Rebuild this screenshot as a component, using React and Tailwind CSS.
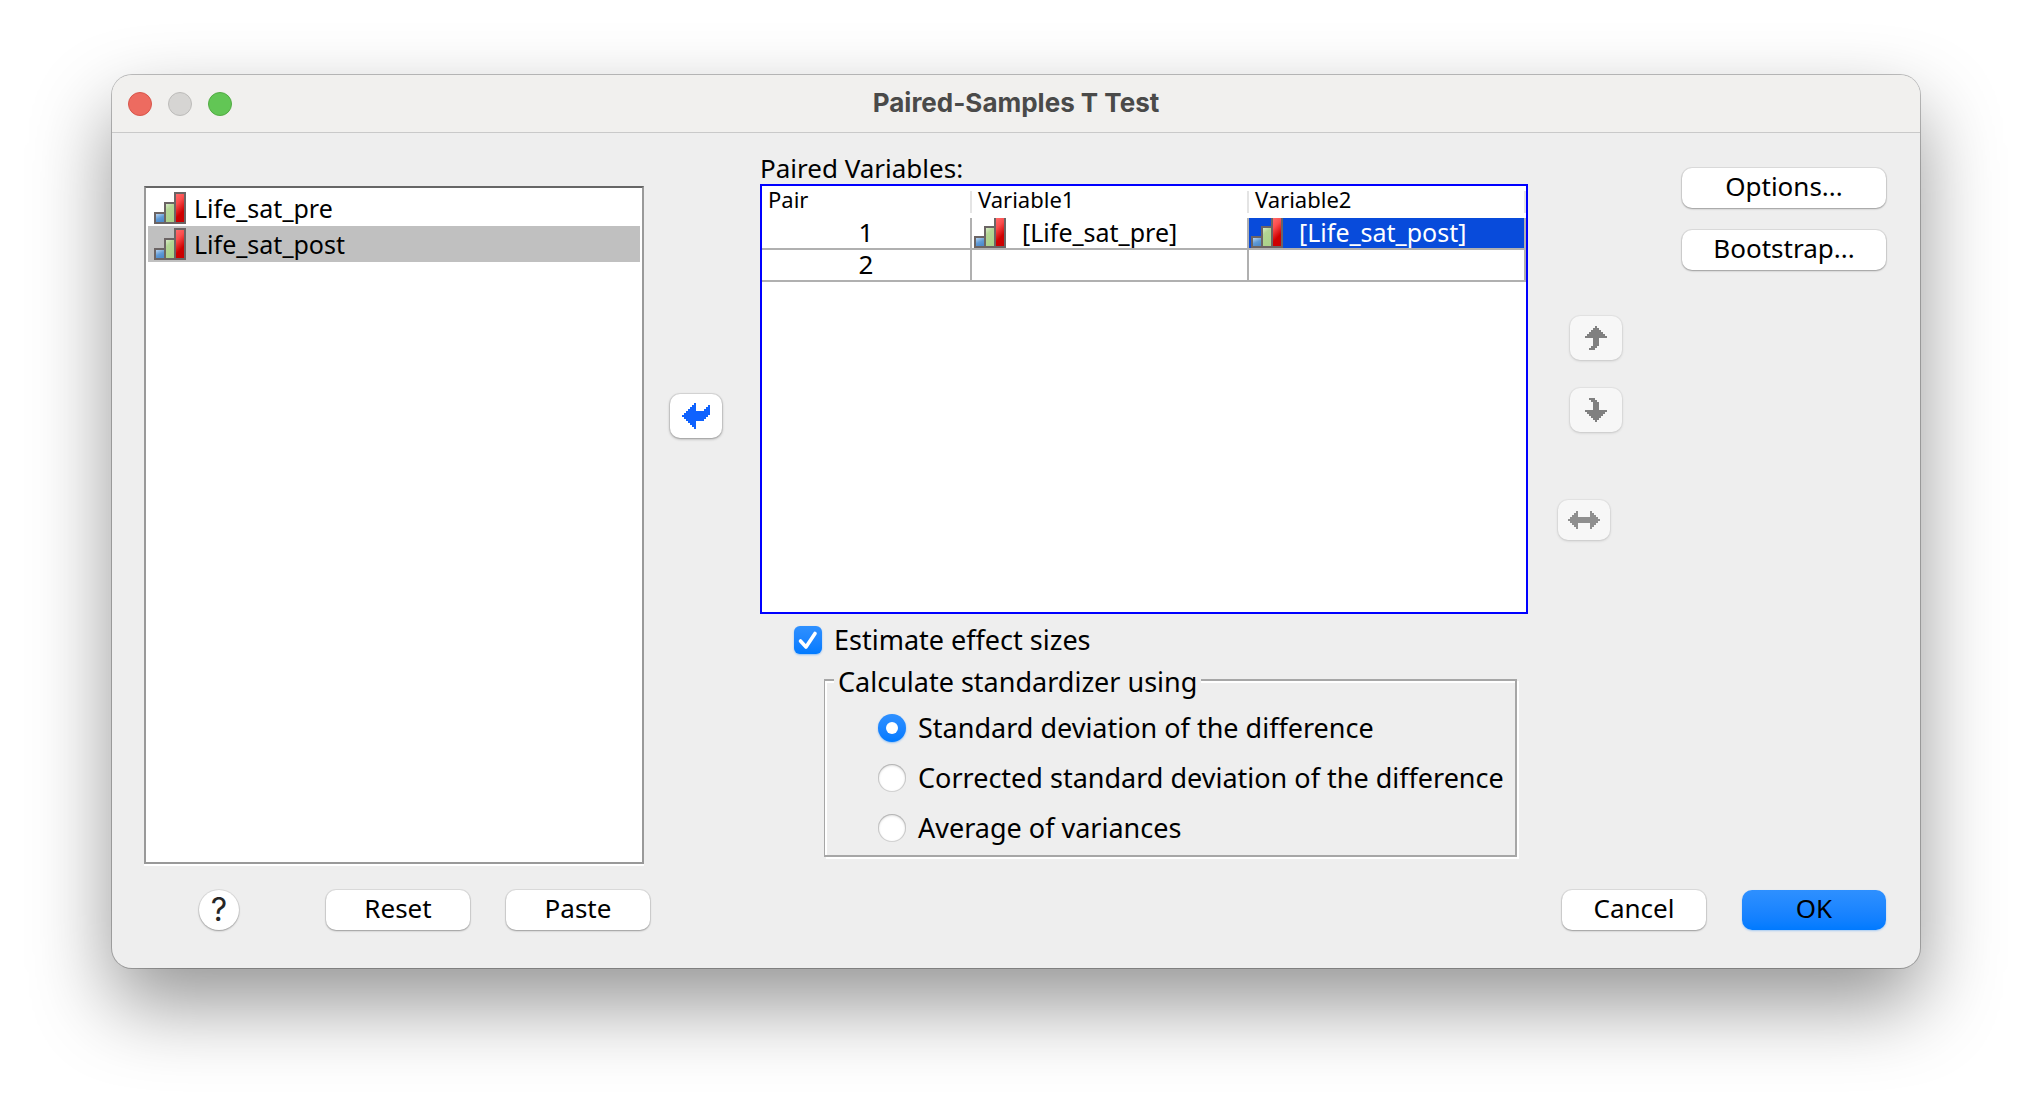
import { useState } from "react";

function OrdinalIcon() {
  return (
    <svg width="32" height="32" viewBox="0 0 16 16" shapeRendering="crispEdges" className="shrink-0" aria-hidden="true">
      <defs>
        <linearGradient id="ordinal-blue" x1="0" y1="0" x2="0.5" y2="1">
          <stop offset="0" stopColor="#b9d5f1" />
          <stop offset="0.6" stopColor="#5f9ad6" />
          <stop offset="1" stopColor="#4f8ccc" />
        </linearGradient>
        <linearGradient id="ordinal-green" x1="0" y1="0" x2="0.4" y2="1">
          <stop offset="0" stopColor="#d9ecc9" />
          <stop offset="0.35" stopColor="#b3d694" />
          <stop offset="1" stopColor="#acd28b" />
        </linearGradient>
        <linearGradient id="ordinal-red" x1="0" y1="0" x2="0.3" y2="1">
          <stop offset="0" stopColor="#ff6b6b" />
          <stop offset="0.35" stopColor="#fb4d4d" />
          <stop offset="0.8" stopColor="#cf0000" />
          <stop offset="1" stopColor="#cc0000" />
        </linearGradient>
      </defs>
      <path d="M0 10H5V5H10V0H16V16H0Z" fill="#6b6464" />
      <rect x="1" y="11" width="4" height="4" fill="url(#ordinal-blue)" />
      <rect x="6" y="6" width="4" height="9" fill="url(#ordinal-green)" />
      <rect x="11" y="1" width="4" height="14" fill="url(#ordinal-red)" />
    </svg>
  );
}

function UpIcon() {
  return (
    <svg width="22" height="24" viewBox="0 0 11 12" shapeRendering="crispEdges" fill="#808080" aria-hidden="true">
      <path d="M5 0h1v1h1v1h1v1h1v1h1v1h1v1H7v4H6v1H5v1H2v-1h1v-1h1V6H0V5h1V4h1V3h1V2h1V1h1z" />
    </svg>
  );
}

function DownIcon() {
  return (
    <svg width="22" height="24" viewBox="0 0 11 12" shapeRendering="crispEdges" fill="#808080" aria-hidden="true">
      <path d="M2 0h3v1h1v1h1v4h4v1h-1v1H9v1H8v1H7v1H6v1H5v-1H4v-1H3V9H2V8H1V7H0V6h4V2H3V1H2z" />
    </svg>
  );
}

function SwapIcon() {
  return (
    <svg width="32" height="18" viewBox="0 0 16 9" shapeRendering="crispEdges" fill="#8f8f8f" aria-hidden="true">
      <path d="M4 0h1v3h6V0h1v1h1v1h1v1h1v1h1v1h-1v1h-1v1h-1v1h-1v1h-1V6H5v3H4V8H3V7H2V6H1V5H0V4h1V3h1V2h1V1h1z" />
    </svg>
  );
}

function LeftIcon() {
  return (
    <svg width="28" height="26" viewBox="0 0 14 13" shapeRendering="crispEdges" fill="#0f62fe" aria-hidden="true">
      <path d="M6 0h1v4h4V3h1V2h1V1h1v5h-1v1h-1v1h-1v1H7v4H6v-1H5v-1H4v-1H3V9H2V8H1V7H0V6h1V5h1V4h1V3h1V2h1V1h1z" />
    </svg>
  );
}

function PushButton({ children, wide = false }) {
  return (
    <button
      type="button"
      className={
        (wide ? "w-[204px]" : "w-36") +
        " h-10 rounded-[10px] bg-white pb-1 text-[26px] leading-9 shadow-[0_0_0_1px_rgba(0,0,0,0.07),0_1px_2px_rgba(0,0,0,0.3)]"
      }
    >
      {children}
    </button>
  );
}

function IconButton({ label, className, children }) {
  return (
    <button
      type="button"
      disabled
      aria-label={label}
      className={
        "flex w-[52px] items-center justify-center rounded-[10px] bg-[#f7f7f7] shadow-[0_0_0_1px_rgba(0,0,0,0.03),0_1px_3px_rgba(0,0,0,0.15)] " +
        className
      }
    >
      {children}
    </button>
  );
}

function VariableCell({ name, selected = false }) {
  return (
    <td
      className={
        "border-r-2 border-b-2 border-[#b0b0b0] p-0 align-top " + (selected ? "bg-[#084bdb] text-white" : "")
      }
    >
      {name && (
        <div className="flex gap-4 pl-[2px]">
          <span className="flex h-[30px] items-end overflow-hidden">
            <OrdinalIcon />
          </span>
          {name}
        </div>
      )}
    </td>
  );
}

const variables = ["Life_sat_pre", "Life_sat_post"];

const standardizers = [
  "Standard deviation of the difference",
  "Corrected standard deviation of the difference",
  "Average of variances",
];

export default function App() {
  const [estimate, setEstimate] = useState(true);
  const [standardizer, setStandardizer] = useState(0);

  return (
    <div className="min-h-screen bg-white px-28 pt-[75px] font-['Noto_Sans','Open_Sans',sans-serif] text-black">
      <main className="rounded-[20px] bg-[#eeeeee] shadow-[0_0_0_1px_rgba(0,0,0,0.24),0_36px_80px_rgba(0,0,0,0.42)]">
        <header className="grid h-[58px] grid-cols-[1fr_auto_1fr] items-center rounded-t-[20px] border-b border-[#c9c9c9] bg-[#f1f0ee] px-4">
          <div className="flex gap-4">
            <button type="button" aria-label="Close" className="size-6 rounded-full border border-[#d8554a] bg-[#ed6b60]" />
            <button type="button" aria-label="Minimize" disabled className="size-6 rounded-full border border-[#bdbcba] bg-[#d6d5d3]" />
            <button type="button" aria-label="Zoom" className="size-6 rounded-full border border-[#52ab43] bg-[#62c655]" />
          </div>
          <h1 className="pb-[2px] font-['Inter',sans-serif] text-[26px] leading-8 font-bold text-[#4a4a49]">Paired-Samples T Test</h1>
        </header>

        <div className="flex pt-[19px] pr-[34px] pl-8">
          <div className="flex flex-[500] flex-col pt-[34px]">
            <ul
              role="listbox"
              aria-label="Variables"
              className="flex-1 border-2 border-[#999] border-t-[#666] bg-white p-[2px] shadow-[0_2px_0_white]"
            >
              {variables.map((name, i) => (
                <li
                  key={name}
                  role="option"
                  aria-selected={i === 1}
                  className={"flex h-9 items-center gap-2 pl-[6px] text-[25px] leading-9 " + (i === 1 ? "bg-[#c0c0c0]" : "")}
                >
                  <OrdinalIcon />
                  {name}
                </li>
              ))}
            </ul>
          </div>

          <div className="w-[116px] shrink-0 pt-[242px] pl-[26px]">
            <button
              type="button"
              aria-label="Remove from paired variables"
              className="flex h-11 w-[52px] items-center justify-center rounded-[10px] bg-white shadow-[0_0_0_1px_rgba(0,0,0,0.07),0_1px_3px_rgba(0,0,0,0.35)]"
            >
              <LeftIcon />
            </button>
          </div>

          <section className="flex-[768] pb-[7px]">
            <h2 id="paired-label" className="text-[26px] leading-8">Paired Variables:</h2>
            <div className="h-[430px] border-2 border-[#0000ff] bg-white">
              <table aria-labelledby="paired-label" className="w-full table-fixed border-separate border-spacing-0 text-left">
                <colgroup>
                  <col className="w-[210px]" />
                  <col />
                  <col />
                </colgroup>
                <thead>
                  <tr className="h-8">
                    {["Pair", "Variable1", "Variable2"].map((title) => (
                      <th key={title} scope="col" className="p-0 text-[22px] leading-4 font-normal">
                        <div className="h-[22px] border-r-2 border-[#e4e4e4] pl-[6px]">
                          {title}
                        </div>
                      </th>
                    ))}
                  </tr>
                </thead>
                <tbody className="text-[25px] leading-7">
                  <tr className="h-8">
                    <td className="border-r-2 border-b-2 border-[#b0b0b0] p-0 text-center align-top text-[26px]">1</td>
                    <VariableCell name="[Life_sat_pre]" />
                    <VariableCell name="[Life_sat_post]" selected />
                  </tr>
                  <tr className="h-8">
                    <td className="border-r-2 border-b-2 border-[#b0b0b0] p-0 text-center align-top text-[26px]">2</td>
                    <VariableCell />
                    <VariableCell />
                  </tr>
                </tbody>
              </table>
            </div>

            <label className="mt-3 ml-[34px] flex w-fit items-center gap-3 text-[27px] leading-7">
              <span className="grid size-7 place-items-center">
                <input
                  type="checkbox"
                  checked={estimate}
                  onChange={(e) => setEstimate(e.target.checked)}
                  className="col-start-1 row-start-1 size-7 appearance-none rounded-[6px] bg-white shadow-[0_1px_2px_rgba(0,0,0,0.3)] checked:bg-linear-to-b checked:from-[#2e90ff] checked:to-[#007aff] checked:shadow-[0_1px_2px_rgba(0,122,255,0.4)]"
                />
                {estimate && (
                  <svg width="28" height="28" viewBox="0 0 28 28" className="pointer-events-none col-start-1 row-start-1" aria-hidden="true">
                    <path d="M6.5 15L12 21L21 7.5" fill="none" stroke="white" strokeWidth="3.6" strokeLinecap="round" strokeLinejoin="round" />
                  </svg>
                )}
              </span>
              Estimate effect sizes
            </label>

            <fieldset className="mt-2 mr-[11px] ml-16 border-2 border-l border-[#a6a6a6] pb-[13px] pl-[9px] shadow-[2px_2px_0_white,inset_2px_2px_0_white]">
              <legend className="bg-[#eeeeee] px-1 pt-1 text-[27px] leading-8">Calculate standardizer using</legend>
              <div className="flex flex-col gap-[22px] pt-4 pl-11">
                {standardizers.map((text, i) => (
                  <label key={text} className="flex w-fit items-center gap-3 text-[27px] leading-7 whitespace-nowrap">
                    <span className="grid size-7 place-items-center">
                      <input
                        type="radio"
                        name="standardizer"
                        checked={standardizer === i}
                        onChange={() => setStandardizer(i)}
                        className="col-start-1 row-start-1 size-7 appearance-none rounded-full bg-white shadow-[inset_0_0_0_1px_rgba(0,0,0,0.15),inset_0_1px_3px_rgba(0,0,0,0.25)] checked:bg-linear-to-b checked:from-[#2e90ff] checked:to-[#007aff] checked:shadow-[0_1px_2px_rgba(0,122,255,0.4)]"
                      />
                      {standardizer === i && (
                        <span className="pointer-events-none col-start-1 row-start-1 size-3 rounded-full bg-white" />
                      )}
                    </span>
                    {text}
                  </label>
                ))}
              </div>
            </fieldset>
          </section>

          <aside className="flex w-[358px] shrink-0 justify-between pl-[30px]">
            <div className="pt-[164px]">
              <IconButton label="Move pair up" className="ml-3 h-11">
                <UpIcon />
              </IconButton>
              <IconButton label="Move pair down" className="mt-7 ml-3 h-11">
                <DownIcon />
              </IconButton>
              <IconButton label="Swap variables" className="mt-[68px] h-10">
                <SwapIcon />
              </IconButton>
            </div>
            <div className="flex flex-col gap-[22px] pt-4">
              <PushButton wide>Options...</PushButton>
              <PushButton wide>Bootstrap...</PushButton>
            </div>
          </aside>
        </div>

        <footer className="flex items-center pt-[26px] pr-[34px] pb-[38px] pl-[87px]">
          <button
            type="button"
            aria-label="Help"
            className="mr-[87px] size-10 rounded-full bg-white font-['Inter',sans-serif] text-[32px] leading-10 text-[#262626] shadow-[0_0_0_1px_rgba(0,0,0,0.07),0_1px_2px_rgba(0,0,0,0.3)]"
          >
            ?
          </button>
          <div className="flex gap-9">
            <PushButton>Reset</PushButton>
            <PushButton>Paste</PushButton>
          </div>
          <div className="ml-auto flex gap-9">
            <PushButton>Cancel</PushButton>
            <button
              type="button"
              className="h-10 w-36 rounded-[10px] bg-linear-to-b from-[#2e90ff] to-[#007aff] pb-1 text-[26px] leading-9 shadow-[0_1px_2px_rgba(0,122,255,0.3)]"
            >
              OK
            </button>
          </div>
        </footer>
      </main>
    </div>
  );
}
